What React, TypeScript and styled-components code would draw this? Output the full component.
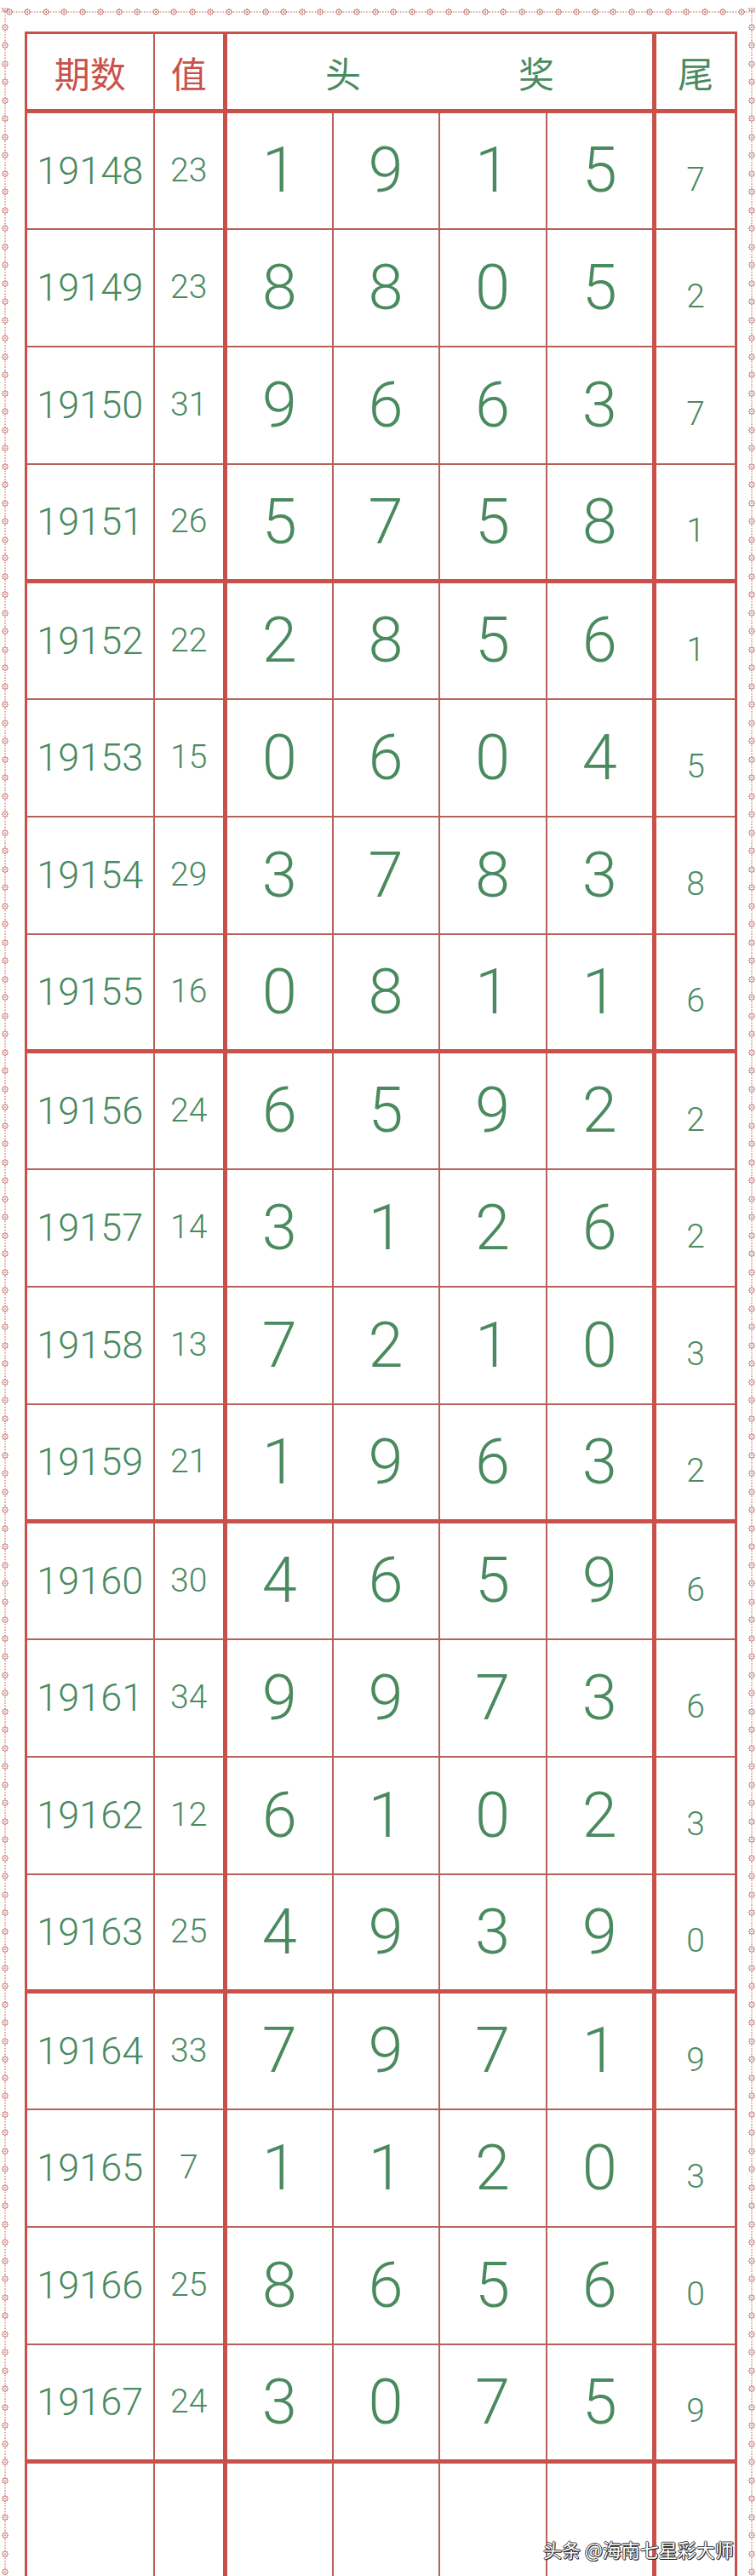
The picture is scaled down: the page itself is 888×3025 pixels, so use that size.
import React from "react";
import styled, { createGlobalStyle } from "styled-components";

const RED = "#c9514a";
const THIN = "#b9605a";
const GREEN = "#4a8a5f";
const DOT = "#c26a60";

const flower = (cx: number, cy: number) => {
  const dots: string[] = [];
  for (let i = 0; i < 8; i++) {
    const a = (i * Math.PI) / 4;
    dots.push(
      `<circle cx='${(cx + 3 * Math.cos(a)).toFixed(2)}' cy='${(cy + 3 * Math.sin(a)).toFixed(2)}' r='0.9'/>`
    );
  }
  dots.push(`<circle cx='${cx}' cy='${cy}' r='0.9'/>`);
  return dots.join("");
};

const hTile = `<svg xmlns='http://www.w3.org/2000/svg' width='21.5' height='10' viewBox='0 0 21.5 10'><g fill='${DOT}'>${flower(
  4,
  5
)}</g><line x1='8.5' y1='5' x2='21.5' y2='5' stroke='${DOT}' stroke-width='1.1' stroke-dasharray='1.6 1.6'/></svg>`;
const vTile = `<svg xmlns='http://www.w3.org/2000/svg' width='10' height='21.5' viewBox='0 0 10 21.5'><g fill='${DOT}'>${flower(
  5,
  4
)}</g><line x1='5' y1='8.5' x2='5' y2='21.5' stroke='${DOT}' stroke-width='1.1' stroke-dasharray='1.6 1.6'/></svg>`;

const uri = (s: string) => `url("data:image/svg+xml,${encodeURIComponent(s)}")`;

const GlobalStyle = createGlobalStyle`
  html, body { margin: 0; padding: 0; background: #ffffff; }
  body { font-family: "Noto Sans CJK SC", "Noto Sans", sans-serif; }
`;

const Page = styled.div`
  position: relative;
  width: 888px;
  height: 3025px;
  overflow: hidden;
  background: #ffffff;
`;

const Frame = styled.div`
  margin: 9px 0 0 1px;
  width: 887px;
  height: 3016px;
  box-sizing: border-box;
  padding: 28px 0 0 28px;
  background-image: ${uri(hTile)}, ${uri(vTile)}, ${uri(vTile)};
  background-repeat: repeat-x, repeat-y, repeat-y;
  background-position: 6px 0, 0 19px, right 0 top 19px;
`;

const Table = styled.table`
  border-collapse: collapse;
  table-layout: fixed;
  width: 834px;
  border: 3px solid ${RED};
`;

const Col = styled.col<{ $w: number }>`
  width: ${(p) => p.$w}px;
`;

const HeadCell = styled.th<{ $green?: boolean; $thickRight?: boolean }>`
  height: 88px;
  padding: 0;
  font-family: "Noto Sans CJK SC", sans-serif;
  font-weight: 400;
  font-size: 42px;
  color: ${(p) => (p.$green ? GREEN : RED)};
  text-align: center;
  vertical-align: middle;
  border-right: ${(p) => (p.$thickRight ? `5px solid ${RED}` : `2px solid ${THIN}`)};
  border-bottom: 5px solid ${RED};
`;

const PrizeHead = styled.div`
  display: flex;
  justify-content: center;
  gap: 185px;
`;

const Cell = styled.td<{ $kind: "period" | "sum" | "prize" | "tail"; $thickBottom?: boolean; $thickRight?: boolean }>`
  box-sizing: border-box;
  height: 138px;
  padding: ${(p) => (p.$kind === "tail" ? "22px 0 0" : "0")};
  text-align: center;
  vertical-align: middle;
  font-family: Roboto, "Liberation Sans", sans-serif;
  font-weight: 300;
  color: ${GREEN};
  font-size: ${(p) =>
    p.$kind === "period" ? 45 : p.$kind === "sum" ? 39 : p.$kind === "prize" ? 74 : 39}px;
  line-height: 1;
  border-right: ${(p) => (p.$thickRight ? `5px solid ${RED}` : `2px solid ${THIN}`)};
  border-bottom: ${(p) => (p.$thickBottom ? `5px solid ${RED}` : `2px solid ${THIN}`)};
`;

const Watermark = styled.div`
  position: absolute;
  left: 638px;
  top: 2979px;
  font-family: "Noto Sans CJK SC", sans-serif;
  font-size: 22px;
  line-height: 28px;
  color: #ffffff;
  white-space: nowrap;
  text-shadow: 1px 1px 0 #222, -1px 0 0 #444, 0 -1px 0 #444, 1px 0 0 #222, 0 1px 0 #222;
`;

const rows: [string, string, number[], string][] = [
  ["19148", "23", [1, 9, 1, 5], "7"],
  ["19149", "23", [8, 8, 0, 5], "2"],
  ["19150", "31", [9, 6, 6, 3], "7"],
  ["19151", "26", [5, 7, 5, 8], "1"],
  ["19152", "22", [2, 8, 5, 6], "1"],
  ["19153", "15", [0, 6, 0, 4], "5"],
  ["19154", "29", [3, 7, 8, 3], "8"],
  ["19155", "16", [0, 8, 1, 1], "6"],
  ["19156", "24", [6, 5, 9, 2], "2"],
  ["19157", "14", [3, 1, 2, 6], "2"],
  ["19158", "13", [7, 2, 1, 0], "3"],
  ["19159", "21", [1, 9, 6, 3], "2"],
  ["19160", "30", [4, 6, 5, 9], "6"],
  ["19161", "34", [9, 9, 7, 3], "6"],
  ["19162", "12", [6, 1, 0, 2], "3"],
  ["19163", "25", [4, 9, 3, 9], "0"],
  ["19164", "33", [7, 9, 7, 1], "9"],
  ["19165", "7", [1, 1, 2, 0], "3"],
  ["19166", "25", [8, 6, 5, 6], "0"],
  ["19167", "24", [3, 0, 7, 5], "9"],
];

export default function App() {
  return (
    <Page>
      <GlobalStyle />
      <Frame>
        <Table>
          <colgroup>
            <Col $w={150} />
            <Col $w={84} />
            <Col $w={126} />
            <Col $w={125} />
            <Col $w={126} />
            <Col $w={127} />
            <Col $w={96} />
          </colgroup>
          <thead>
            <tr>
              <HeadCell>期数</HeadCell>
              <HeadCell $thickRight>值</HeadCell>
              <HeadCell colSpan={4} $green $thickRight>
                <PrizeHead>
                  <span>头</span>
                  <span>奖</span>
                </PrizeHead>
              </HeadCell>
              <HeadCell $green>尾</HeadCell>
            </tr>
          </thead>
          <tbody>
            {rows.map(([p, s, d, t], i) => {
              const thick = i % 4 === 3;
              return (
                <tr key={p}>
                  <Cell $kind="period" $thickBottom={thick}>{p}</Cell>
                  <Cell $kind="sum" $thickBottom={thick} $thickRight>{s}</Cell>
                  {d.map((n, j) => (
                    <Cell key={j} $kind="prize" $thickBottom={thick} $thickRight={j === 3}>
                      {n}
                    </Cell>
                  ))}
                  <Cell $kind="tail" $thickBottom={thick}>{t}</Cell>
                </tr>
              );
            })}
            <tr>
              <Cell $kind="period" />
              <Cell $kind="sum" $thickRight />
              <Cell $kind="prize" />
              <Cell $kind="prize" />
              <Cell $kind="prize" />
              <Cell $kind="prize" $thickRight />
              <Cell $kind="tail" />
            </tr>
          </tbody>
        </Table>
      </Frame>
      <Watermark>头条 @海南七星彩大师</Watermark>
    </Page>
  );
}
